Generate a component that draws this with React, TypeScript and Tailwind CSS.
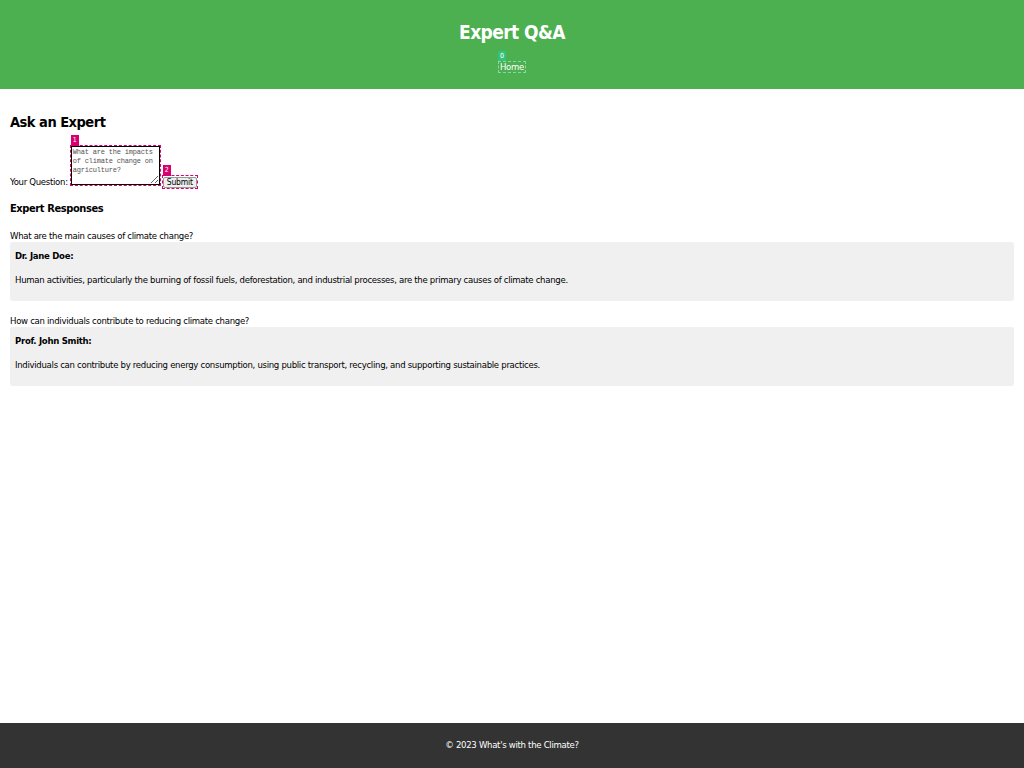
import React from "react";

const base = "'DejaVu Sans Condensed', 'DejaVu Sans', sans-serif";

function Badge({ n, color, className }: { n: string; color: string; className: string }) {
  return (
    <span
      className={`absolute flex items-center justify-center text-white text-[7px] leading-none tracking-normal ${className}`}
      style={{ background: color }}
    >
      {n}
    </span>
  );
}

export default function App() {
  return (
    <div
      className="min-h-screen flex flex-col bg-white text-black text-[9.5px] tracking-[-0.3px]"
      style={{ fontFamily: base }}
    >
      <header className="h-[89px] bg-[#4caf50] text-white flex flex-col items-center">
        <h1 className="mt-[20px] text-[19px] leading-[24px] font-bold tracking-[-0.6px]">Expert Q&amp;A</h1>
        <nav className="mt-[17px] relative">
          <Badge n="0" color="#33c27a" className="left-0 -top-[10px] w-[8px] h-[10px]" />
          <a className="block px-[1px] border border-dashed border-[#86d9a6] leading-[10px]">Home</a>
        </nav>
      </header>
      <main className="flex-1 px-[10px]">
        <h2 className="mt-[24px] text-[14.5px] leading-[19px] font-bold tracking-[-0.5px]">Ask an Expert</h2>
        <div className="mt-[13px] leading-[12px]">
          <span>Your Question:</span>
          <span className="relative inline-block align-baseline border border-dashed border-[#d6006e] ml-[2px]">
            <Badge n="1" color="#d6006e" className="left-0 -top-[11px] w-[8px] h-[11px]" />
            <textarea
              className="block w-[89px] h-[39px] border border-black bg-white text-[7px] leading-[9px] tracking-[-0.2px] text-[#555] px-0 pt-[1px] pl-[1px]"
              style={{ fontFamily: "'Liberation Mono', 'DejaVu Sans Mono', monospace" }}
              defaultValue="What are the impacts of climate change on agriculture?"
            />
          </span>
          <span className="relative inline-block align-baseline border border-dashed border-[#d6006e] ml-[1px]">
            <Badge n="2" color="#d6006e" className="left-0 -top-[11px] w-[8px] h-[11px]" />
            <button className="inline-block px-[3px] h-[11px] leading-[9px] bg-[#efefef] border border-[#999] rounded-[2px] text-[8.5px] tracking-[-0.2px] text-black">
              Submit
            </button>
          </span>
        </div>
        <h3 className="mt-[12px] text-[11px] leading-[15px] font-bold tracking-[-0.4px]">Expert Responses</h3>
        <p className="mt-[14px] leading-[12px]">What are the main causes of climate change?</p>
        <div className="bg-[#f0f0f0] rounded-[3px] h-[59px] px-[5px] pt-[8px]">
          <p className="font-bold leading-[12px]">Dr. Jane Doe:</p>
          <p className="mt-[12px] leading-[12px]">
            Human activities, particularly the burning of fossil fuels, deforestation, and industrial processes, are the primary causes of climate change.
          </p>
        </div>
        <p className="mt-[14px] leading-[12px]">How can individuals contribute to reducing climate change?</p>
        <div className="bg-[#f0f0f0] rounded-[3px] h-[59px] px-[5px] pt-[8px]">
          <p className="font-bold leading-[12px]">Prof. John Smith:</p>
          <p className="mt-[12px] leading-[12px]">
            Individuals can contribute by reducing energy consumption, using public transport, recycling, and supporting sustainable practices.
          </p>
        </div>
      </main>
      <footer className="h-[45px] bg-[#333333] text-white flex items-center justify-center">
        © 2023 What's with the Climate?
      </footer>
    </div>
  );
}
